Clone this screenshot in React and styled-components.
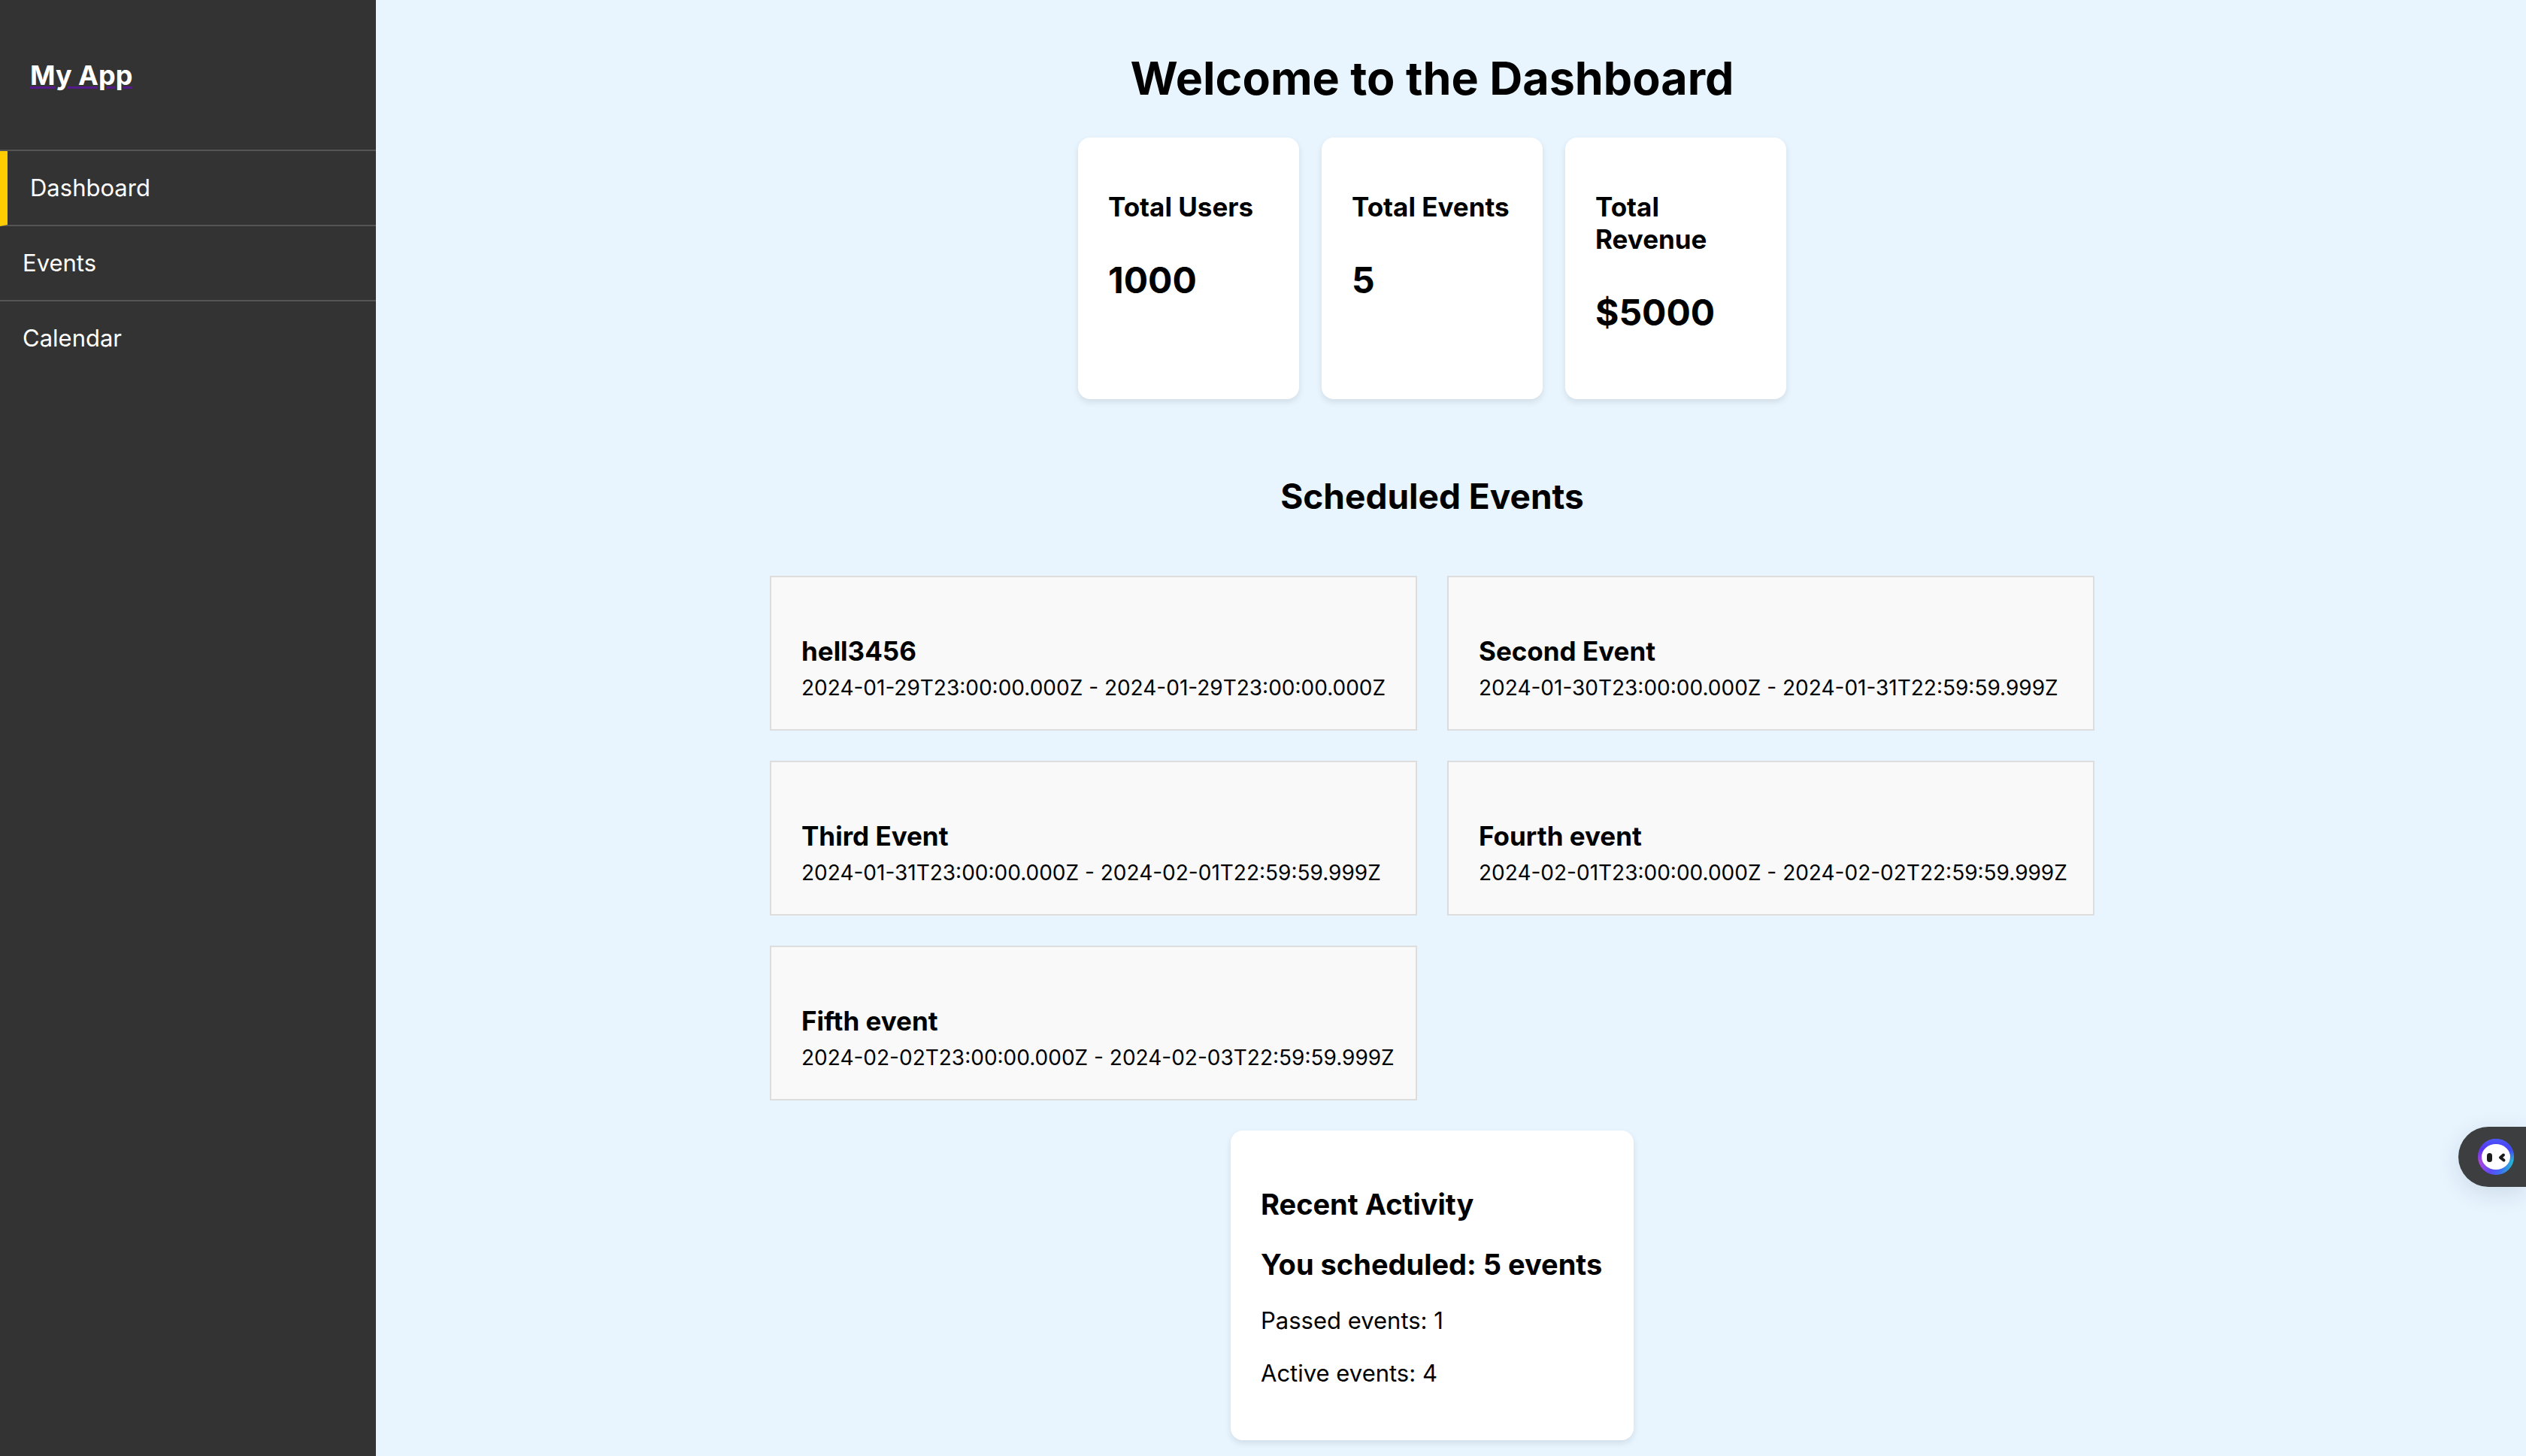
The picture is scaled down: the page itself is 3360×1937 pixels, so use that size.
import React from "react";
import styled, { createGlobalStyle } from "styled-components";

const GlobalStyle = createGlobalStyle`
  * {
    box-sizing: border-box;
    margin: 0;
    padding: 0;
  }
  body {
    background: #e8f5ff;
    color: #000;
    font-family: Inter, "Liberation Sans", sans-serif;
    font-size: 31px;
    line-height: 38px;
  }
`;

const Layout = styled.div`
  display: flex;
  min-height: 100vh;
`;

const Sidebar = styled.aside`
  flex: 0 0 500px;
  background: #333;
  color: #fff;
`;

const Brand = styled.div`
  padding: 78px 40px 77px;
  border-bottom: 2px solid #555;
`;

const BrandLink = styled.a`
  display: block;
  color: #551a8b;
  font-size: 36px;
  font-weight: 700;
  line-height: 44px;
  text-decoration: underline 3px;
`;

const BrandName = styled.span`
  color: #fff;
`;

const NavList = styled.ul`
  list-style: none;
`;

const NavLink = styled.a`
  display: block;
  padding: 30px;
  color: #fff;
  text-decoration: none;
  border-left: ${({ $active }) => ($active ? "10px solid #fc0" : "0")};
  border-bottom: ${({ $last }) => ($last ? "0" : "2px solid #555")};
`;

const Main = styled.main`
  flex: 1;
  min-width: 0;
  display: flex;
  flex-direction: column;
  align-items: center;
  padding: 66px 50px 20px 0;
`;

const PageTitle = styled.h1`
  font-size: 61px;
  line-height: 77px;
  margin-bottom: 40px;
`;

const Stats = styled.section`
  display: flex;
  gap: 30px;
  margin-bottom: 100px;
`;

const Card = styled.article`
  background: #fff;
  border-radius: 16px;
  box-shadow: 0 4px 8px rgba(0, 0, 0, 0.1);
`;

const StatCard = styled(Card)`
  display: flex;
  flex-direction: column;
  gap: 47px;
  width: 294px;
  padding: 71px 40px 86px;
`;

const ItemTitle = styled.h3`
  font-size: 35px;
  line-height: 43px;
`;

const StatValue = styled.p`
  font-size: 48px;
  font-weight: 700;
  line-height: 58px;
`;

const SectionTitle = styled.h2`
  font-size: 46px;
  line-height: 58px;
  margin-bottom: 77px;
`;

const EventGrid = styled.section`
  display: grid;
  grid-template-columns: 1fr 1fr;
  gap: 40px;
  width: 100%;
  max-width: 1762px;
  margin-bottom: 40px;
`;

const EventCard = styled.article`
  display: flex;
  flex-direction: column;
  gap: 9px;
  padding: 77px 28px 37px 40px;
  background: #f9f9f9;
  border: 2px solid #ddd;
`;

const EventDates = styled.p`
  font-size: 28px;
  line-height: 36px;
  white-space: nowrap;
`;

const ActivityCard = styled(Card)`
  display: flex;
  flex-direction: column;
  gap: 32px;
  width: 536px;
  padding: 74px 40px 70px;
`;

const ActivityHeading = styled.h2`
  font-size: 38px;
  line-height: 48px;
  white-space: nowrap;
`;

const AssistantButton = styled.button`
  position: fixed;
  right: 0;
  top: 1499px;
  display: flex;
  align-items: center;
  width: 90px;
  height: 80px;
  padding-left: 26px;
  border: 0;
  border-radius: 40px 0 0 40px;
  background: #3c3e3f;
  box-shadow: 0 8px 32px rgba(0, 30, 60, 0.12);
`;

const navItems = ["Dashboard", "Events", "Calendar"];

const stats = [
  ["Total Users", "1000"],
  ["Total Events", "5"],
  ["Total Revenue", "$5000"],
];

const events = [
  ["hell3456", "2024-01-29T23:00:00.000Z", "2024-01-29T23:00:00.000Z"],
  ["Second Event", "2024-01-30T23:00:00.000Z", "2024-01-31T22:59:59.999Z"],
  ["Third Event", "2024-01-31T23:00:00.000Z", "2024-02-01T22:59:59.999Z"],
  ["Fourth event", "2024-02-01T23:00:00.000Z", "2024-02-02T22:59:59.999Z"],
  ["Fifth event", "2024-02-02T23:00:00.000Z", "2024-02-03T22:59:59.999Z"],
];

function AssistantIcon() {
  return (
    <svg width="48" height="48" viewBox="0 0 48 48" aria-hidden="true">
      <defs>
        <linearGradient id="ring" x1="0.1" y1="0.6" x2="0.95" y2="0.75">
          <stop offset="0" stopColor="#a346e0" />
          <stop offset="0.35" stopColor="#5a4cf5" />
          <stop offset="0.65" stopColor="#3f6cf5" />
          <stop offset="1" stopColor="#27b5d6" />
        </linearGradient>
        <linearGradient id="ringTop" x1="0" y1="0" x2="0" y2="1">
          <stop offset="0" stopColor="#4a5cf8" />
          <stop offset="0.3" stopColor="#4a30f5" stopOpacity="0.8" />
          <stop offset="0.6" stopColor="#4a30f5" stopOpacity="0" />
        </linearGradient>
      </defs>
      <circle cx="24" cy="24" r="24" fill="url(#ring)" />
      <circle cx="24" cy="24" r="24" fill="url(#ringTop)" />
      <ellipse cx="24" cy="24" rx="19" ry="17" fill="#fff" />
      <rect x="12" y="19" width="7" height="12" rx="3.5" fill="#1c1c1c" />
      <path
        d="M34 21.5 L30 25 L34.5 28.5"
        fill="none"
        stroke="#1c1c1c"
        strokeWidth="4"
        strokeLinecap="round"
        strokeLinejoin="round"
      />
    </svg>
  );
}

export default function App() {
  return (
    <>
      <GlobalStyle />
      <Layout>
        <Sidebar>
          <Brand>
            <BrandLink href="#home">
              <BrandName>My App</BrandName>
            </BrandLink>
          </Brand>
          <nav>
            <NavList>
              {navItems.map((item, i) => (
                <li key={item}>
                  <NavLink
                    href={`#${item.toLowerCase()}`}
                    $active={i === 0}
                    $last={i === navItems.length - 1}
                  >
                    {item}
                  </NavLink>
                </li>
              ))}
            </NavList>
          </nav>
        </Sidebar>
        <Main>
          <PageTitle>Welcome to the Dashboard</PageTitle>
          <Stats>
            {stats.map(([label, value]) => (
              <StatCard key={label}>
                <ItemTitle>{label}</ItemTitle>
                <StatValue>{value}</StatValue>
              </StatCard>
            ))}
          </Stats>
          <SectionTitle>Scheduled Events</SectionTitle>
          <EventGrid>
            {events.map(([title, start, end]) => (
              <EventCard key={title}>
                <ItemTitle>{title}</ItemTitle>
                <EventDates>{`${start} - ${end}`}</EventDates>
              </EventCard>
            ))}
          </EventGrid>
          <ActivityCard>
            <ActivityHeading>Recent Activity</ActivityHeading>
            <ActivityHeading>You scheduled: 5 events</ActivityHeading>
            <p>Passed events: 1</p>
            <p>Active events: 4</p>
          </ActivityCard>
        </Main>
      </Layout>
      <AssistantButton type="button" aria-label="Open assistant">
        <AssistantIcon />
      </AssistantButton>
    </>
  );
}
